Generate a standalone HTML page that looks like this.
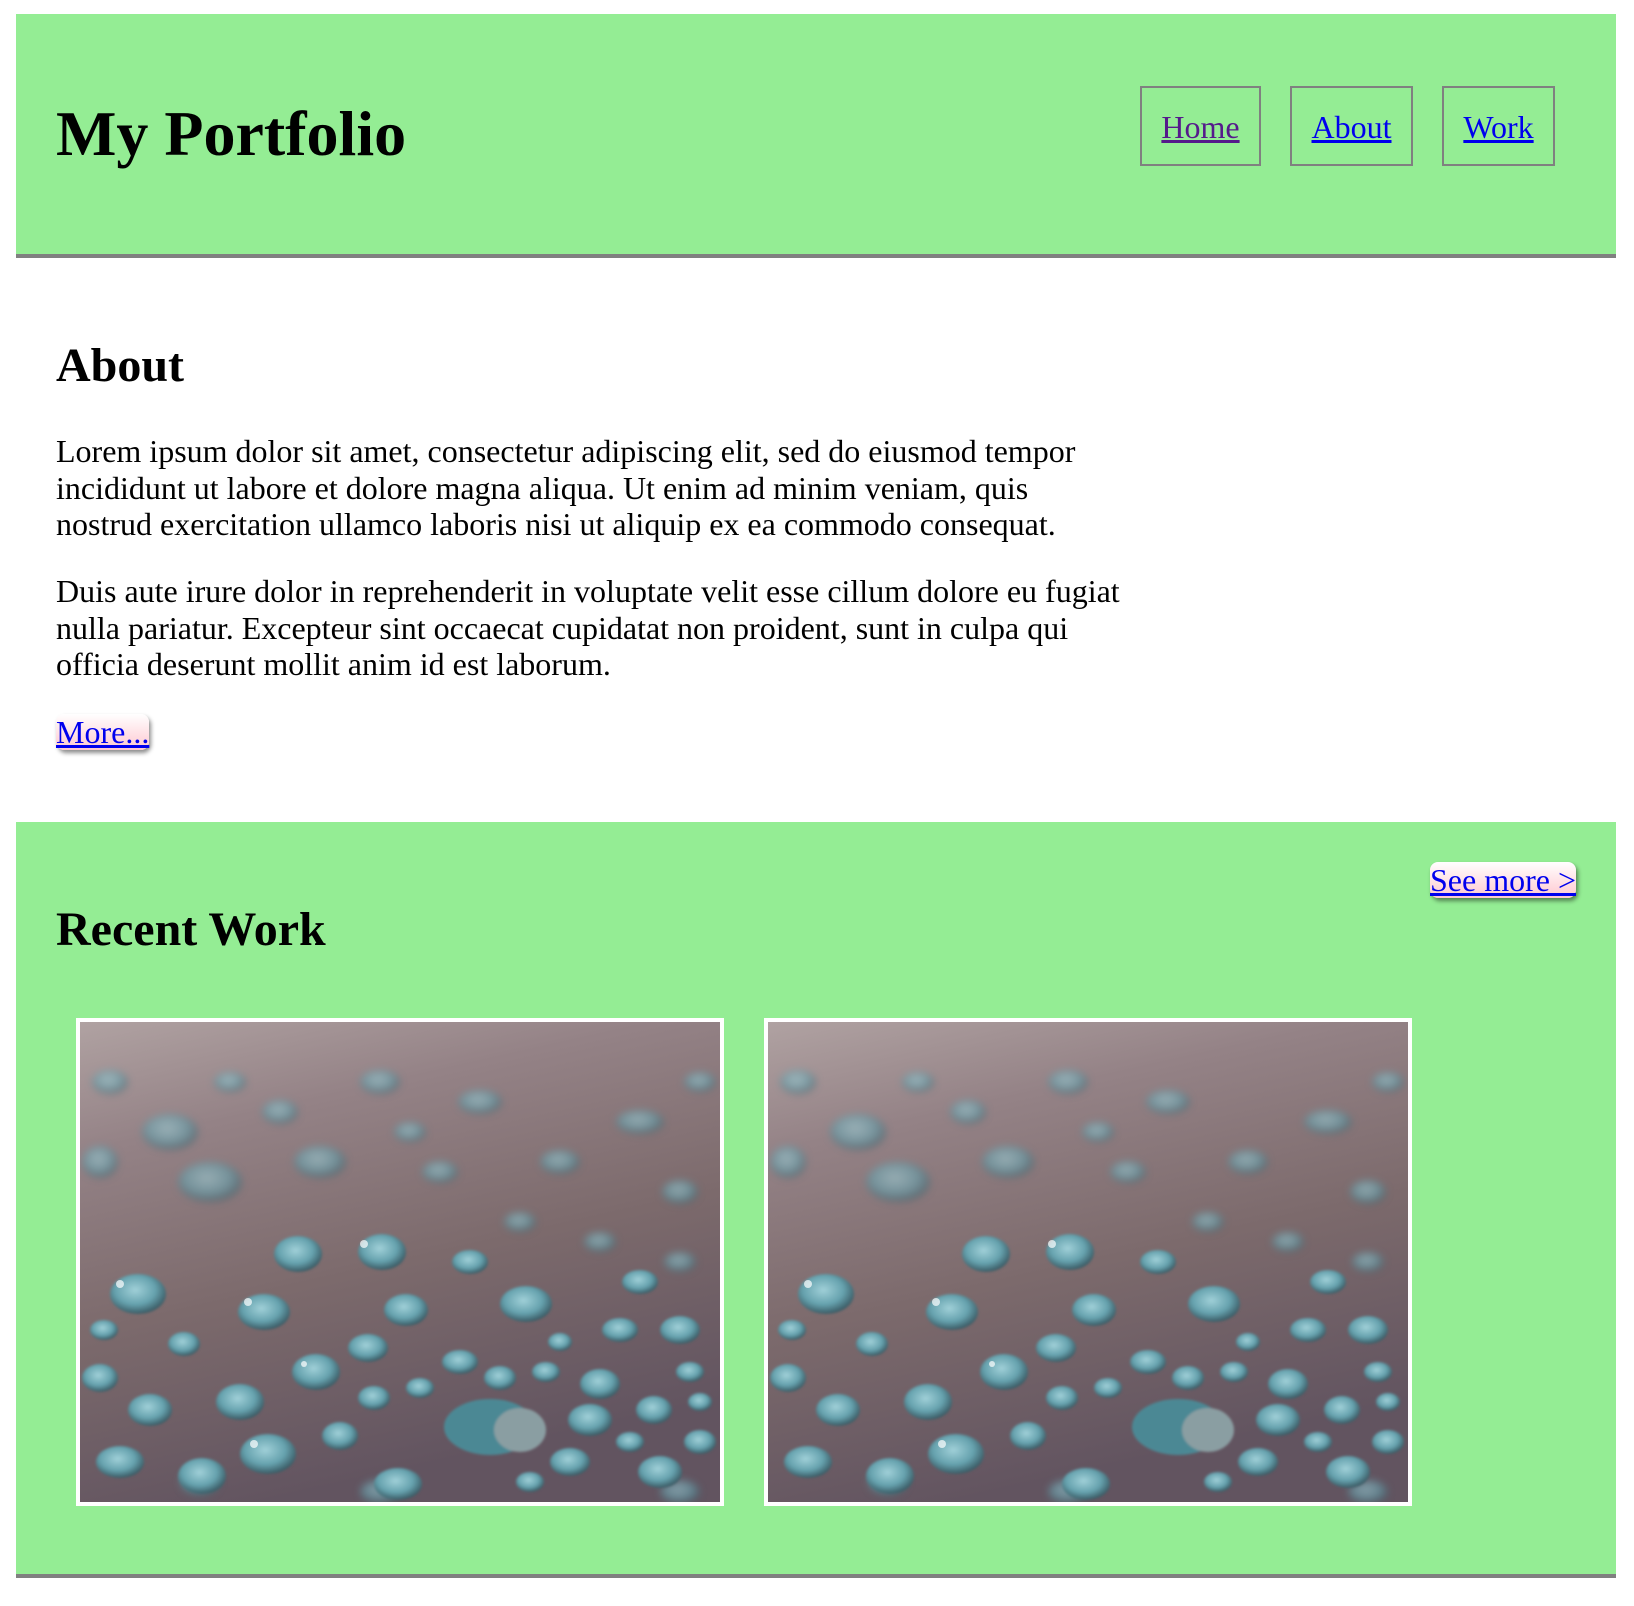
<!DOCTYPE html>
<html><head><meta charset="utf-8"><style>
html,body{margin:0;padding:0;background:#fff;width:1634px;height:1606px;overflow:hidden;position:relative;font-family:"Liberation Serif",serif;}
.abs{position:absolute;}
.green{background:#94ed94;}
a{color:#0000ee;}
.nav{position:absolute;top:86px;height:80px;border:2px solid #808080;box-sizing:border-box;font-size:32px;line-height:78px;text-align:center;}
.p{position:absolute;left:56px;font-size:32px;line-height:36.5px;width:1070px;margin:0;}
.btn{position:absolute;font-size:32px;line-height:36px;border-radius:8px;background:linear-gradient(#fff,#ffc8d0);box-shadow:2px 3px 4px rgba(0,0,0,.45);}
h1,h2{margin:0;font-weight:bold;position:absolute;left:56px;}
.frame{position:absolute;top:1018px;width:640px;height:480px;border:4px solid #fff;}
</style></head><body>
<svg width="0" height="0" style="position:absolute">
<defs>
<linearGradient id="bg" x1="0" y1="0" x2="0.3" y2="1">
<stop offset="0" stop-color="#b0a2a2"/><stop offset="0.25" stop-color="#948286"/><stop offset="0.6" stop-color="#7c6a6c"/><stop offset="1" stop-color="#625460"/>
</linearGradient>
<radialGradient id="dr" cx="0.45" cy="0.4" r="0.6">
<stop offset="0" stop-color="#a0d0d8"/><stop offset="0.6" stop-color="#66a2ae"/><stop offset="1" stop-color="#3a5a64"/>
</radialGradient>
<filter id="bl"><feGaussianBlur stdDeviation="4"/></filter>
<filter id="bl2"><feGaussianBlur stdDeviation="1.2"/></filter>
<symbol id="drops" viewBox="0 0 640 480">
<rect width="640" height="480" fill="url(#bg)"/>
<g fill="url(#dr)" opacity="0.6" filter="url(#bl)">
<ellipse cx="90" cy="110" rx="28" ry="18"/><ellipse cx="130" cy="160" rx="32" ry="20"/><ellipse cx="240" cy="140" rx="26" ry="16"/>
<ellipse cx="300" cy="60" rx="20" ry="12"/><ellipse cx="400" cy="80" rx="22" ry="12"/><ellipse cx="480" cy="140" rx="20" ry="12"/>
<ellipse cx="560" cy="100" rx="24" ry="12"/><ellipse cx="20" cy="140" rx="18" ry="16"/><ellipse cx="360" cy="150" rx="18" ry="11"/>
<ellipse cx="600" cy="170" rx="18" ry="12"/><ellipse cx="200" cy="90" rx="18" ry="12"/><ellipse cx="520" cy="220" rx="16" ry="10"/>
<ellipse cx="440" cy="200" rx="16" ry="10"/><ellipse cx="600" cy="240" rx="16" ry="10"/><ellipse cx="330" cy="110" rx="16" ry="10"/>
<ellipse cx="30" cy="60" rx="18" ry="12"/><ellipse cx="150" cy="60" rx="16" ry="10"/><ellipse cx="620" cy="60" rx="16" ry="10"/>
<ellipse cx="120" cy="460" rx="20" ry="14"/><ellipse cx="300" cy="470" rx="20" ry="12"/><ellipse cx="600" cy="470" rx="20" ry="12"/>
</g>
<g fill="url(#dr)" filter="url(#bl2)">
<ellipse cx="58" cy="272" rx="28" ry="20"/><ellipse cx="184" cy="290" rx="26" ry="18"/><ellipse cx="218" cy="232" rx="24" ry="18"/>
<ellipse cx="302" cy="230" rx="24" ry="18"/><ellipse cx="326" cy="288" rx="22" ry="16"/><ellipse cx="446" cy="282" rx="26" ry="18"/>
<ellipse cx="288" cy="326" rx="20" ry="14"/><ellipse cx="236" cy="350" rx="24" ry="18"/><ellipse cx="160" cy="380" rx="24" ry="18"/>
<ellipse cx="70" cy="388" rx="22" ry="16"/><ellipse cx="20" cy="356" rx="18" ry="14"/><ellipse cx="188" cy="432" rx="28" ry="20"/>
<ellipse cx="122" cy="454" rx="24" ry="18"/><ellipse cx="318" cy="462" rx="24" ry="16"/>
<ellipse cx="510" cy="398" rx="22" ry="16"/><ellipse cx="520" cy="362" rx="20" ry="15"/><ellipse cx="574" cy="388" rx="18" ry="14"/>
<ellipse cx="600" cy="308" rx="20" ry="14"/><ellipse cx="540" cy="308" rx="18" ry="12"/><ellipse cx="380" cy="340" rx="18" ry="12"/>
<ellipse cx="420" cy="356" rx="16" ry="12"/><ellipse cx="340" cy="366" rx="14" ry="10"/><ellipse cx="294" cy="376" rx="16" ry="12"/>
<ellipse cx="466" cy="350" rx="14" ry="10"/><ellipse cx="490" cy="440" rx="20" ry="14"/><ellipse cx="580" cy="450" rx="22" ry="16"/>
<ellipse cx="620" cy="420" rx="16" ry="12"/><ellipse cx="260" cy="414" rx="18" ry="14"/><ellipse cx="40" cy="440" rx="24" ry="16"/>
<ellipse cx="104" cy="322" rx="16" ry="12"/><ellipse cx="24" cy="308" rx="14" ry="10"/><ellipse cx="610" cy="350" rx="14" ry="10"/>
<ellipse cx="560" cy="260" rx="18" ry="12"/><ellipse cx="390" cy="240" rx="18" ry="12"/><ellipse cx="480" cy="320" rx="12" ry="9"/>
<ellipse cx="620" cy="380" rx="12" ry="9"/><ellipse cx="550" cy="420" rx="14" ry="10"/><ellipse cx="450" cy="460" rx="14" ry="10"/>
<ellipse cx="410" cy="405" rx="46" ry="28" fill="#4c8894"/><ellipse cx="440" cy="408" rx="26" ry="22" fill="#8a9ea2"/>
</g>
<g fill="#fff" opacity="0.7">
<circle cx="40" cy="262" r="4"/><circle cx="168" cy="280" r="4"/><circle cx="284" cy="222" r="4"/><circle cx="174" cy="422" r="4"/><circle cx="224" cy="342" r="3"/>
</g>
</symbol>
</defs></svg>

<div class="abs green" style="left:16px;top:14px;width:1600px;height:240px;border-bottom:4px solid #808080;"></div>
<h1 style="top:97px;font-size:64px;line-height:73px;">My Portfolio</h1>
<div class="nav" style="left:1140px;width:121px;"><a href="#" style="color:#551a8b">Home</a></div>
<div class="nav" style="left:1290px;width:123px;"><a href="#">About</a></div>
<div class="nav" style="left:1442px;width:113px;"><a href="#">Work</a></div>

<h2 style="top:339px;font-size:48px;line-height:53px;">About</h2>
<p class="p" style="top:433px;">Lorem ipsum dolor sit amet, consectetur adipiscing elit, sed do eiusmod tempor incididunt ut labore et dolore magna aliqua. Ut enim ad minim veniam, quis nostrud exercitation ullamco laboris nisi ut aliquip ex ea commodo consequat.</p>
<p class="p" style="top:573px;">Duis aute irure dolor in reprehenderit in voluptate velit esse cillum dolore eu fugiat nulla pariatur. Excepteur sint occaecat cupidatat non proident, sunt in culpa qui officia deserunt mollit anim id est laborum.</p>
<div class="btn" style="left:56px;top:714px;"><a href="#">More...</a></div>

<div class="abs green" style="left:16px;top:822px;width:1600px;height:752px;border-bottom:4px solid #808080;"></div>
<div class="btn" style="left:1430px;top:862px;"><a href="#">See more &gt;</a></div>
<h2 style="top:903px;font-size:48px;line-height:53px;">Recent Work</h2>
<div class="frame" style="left:76px;"><svg width="640" height="480"><use href="#drops"/></svg></div>
<div class="frame" style="left:764px;"><svg width="640" height="480"><use href="#drops"/></svg></div>
</body></html>
